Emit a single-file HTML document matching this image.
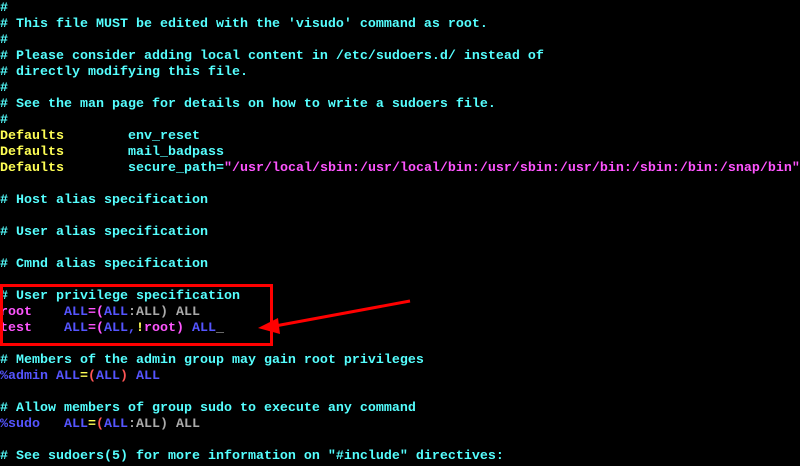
<!DOCTYPE html>
<html><head><meta charset="utf-8"><style>
html,body{margin:0;padding:0;background:#000;width:800px;height:466px;overflow:hidden}
pre{position:absolute;left:0;top:1px;margin:0;font-family:"Liberation Mono",monospace;font-size:13.33px;line-height:16px;color:#aaa;font-weight:bold;white-space:pre}
.c{color:#55ffff}.y{color:#ffff55}.m{color:#ff55ff}.b{color:#5555ff}.r{color:#ff5555}.g{color:#aaaaaa}
svg{position:absolute;left:0;top:0}
</style></head><body>
<pre><span class="c">#
# This file MUST be edited with the 'visudo' command as root.
#
# Please consider adding local content in /etc/sudoers.d/ instead of
# directly modifying this file.
#
# See the man page for details on how to write a sudoers file.
#</span>
<span class="y">Defaults</span>        <span class="c">env_reset</span>
<span class="y">Defaults</span>        <span class="c">mail_badpass</span>
<span class="y">Defaults</span>        <span class="c">secure_path=</span><span class="m">"/usr/local/sbin:/usr/local/bin:/usr/sbin:/usr/bin:/sbin:/bin:/snap/bin"</span>

<span class="c"># Host alias specification</span>

<span class="c"># User alias specification</span>

<span class="c"># Cmnd alias specification</span>

<span class="c"># User privilege specification</span>
<span class="m">root</span>    <span class="b">ALL</span><span class="m">=(</span><span class="b">ALL</span><span class="g">:ALL) ALL</span>
<span class="m">test</span>    <span class="b">ALL</span><span class="m">=(</span><span class="b">ALL,</span><span class="y">!</span><span class="m">root)</span> <span class="b">ALL</span><span class="g">_</span>

<span class="c"># Members of the admin group may gain root privileges</span>
<span class="b">%admin ALL</span><span class="y">=</span><span class="r">(</span><span class="b">ALL</span><span class="r">)</span> <span class="b">ALL</span>

<span class="c"># Allow members of group sudo to execute any command</span>
<span class="b">%sudo   ALL</span><span class="y">=</span><span class="r">(</span><span class="b">ALL</span><span class="g">:ALL) ALL</span>

<span class="c"># See sudoers(5) for more information on "#include" directives:</span></pre>
<svg width="800" height="466">
<rect x="1.5" y="285.5" width="270" height="59" fill="none" stroke="#f00" stroke-width="3"/>
<line x1="410" y1="301" x2="275" y2="326" stroke="#f00" stroke-width="3"/>
<polygon points="258,328 278,318 280,334" fill="#f00"/>
</svg>
</body></html>
